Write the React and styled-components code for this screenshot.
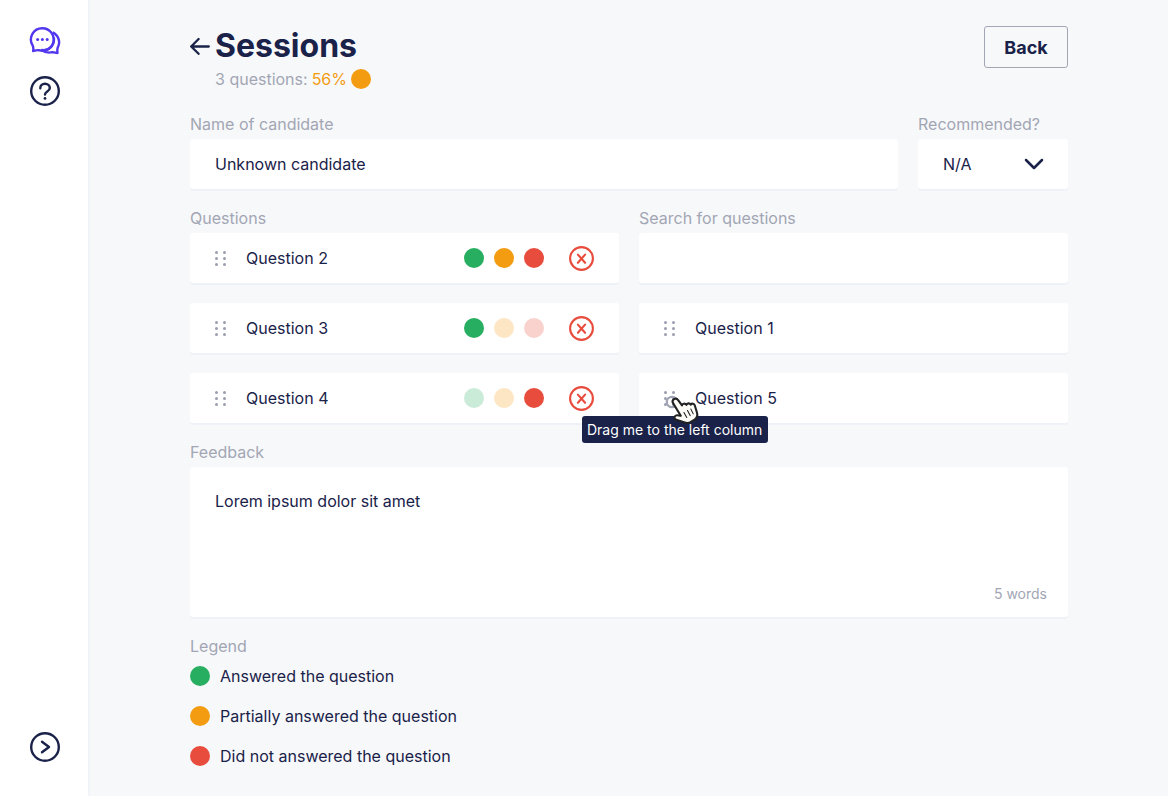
import React from "react";
import styled, { createGlobalStyle } from "styled-components";

const GlobalStyle = createGlobalStyle`
  * {
    box-sizing: border-box;
  }

  body {
    margin: 0;
    background: #f7f8fa;
    color: #1a2249;
    font-family: "Inter", "Liberation Sans", sans-serif;
    font-size: 16px;
    line-height: 19px;
  }

  button, input, select, textarea {
    font: inherit;
    color: inherit;
  }
`;

const Layout = styled.div`
  display: flex;
  min-height: 100vh;
`;

const Sidebar = styled.nav`
  display: flex;
  flex-direction: column;
  align-items: center;
  gap: 20px;
  flex: none;
  width: 90px;
  padding: 26px 0 34px;
  background: white;
  border-right: 2px solid #f0f3f8;
`;

const SideLink = styled.a`
  display: block;
  height: 30px;
  margin-left: 2px;
  color: ${(props) => (props.$active ? "#5138ee" : "#1a2249")};
`;

const IconButton = styled.button`
  display: block;
  padding: 0;
  border: none;
  background: none;
  cursor: pointer;

  svg {
    display: block;
  }
`;

const ToggleButton = styled(IconButton)`
  margin-top: auto;
  margin-left: 2px;
`;

const Main = styled.main`
  flex: 1;
  min-width: 0;
  padding: 26px 100px 30px;
`;

const Header = styled.header`
  display: flex;
  justify-content: space-between;
  align-items: flex-start;
  margin-bottom: 26px;
`;

const TitleRow = styled.div`
  display: flex;
  align-items: center;
  gap: 5px;
`;

const Title = styled.h1`
  margin: 0;
  font-size: 32px;
  line-height: 40px;
  font-weight: 700;
`;

const Summary = styled.div`
  display: flex;
  align-items: center;
  gap: 4px;
  margin-top: 3px;
  padding-left: 25px;
  color: #a2a6b4;
`;

const Percentage = styled.span`
  color: #f39c12;
`;

const BackButton = styled.button`
  min-width: 84px;
  height: 42px;
  padding: 0 19px;
  border: 1px solid #a2a6b4;
  border-radius: 3px;
  background: transparent;
  font-size: 18px;
  font-weight: 700;
  cursor: pointer;
`;

const Form = styled.form`
  display: flex;
  flex-direction: column;
  gap: 20px;
`;

const CandidateRow = styled.div`
  display: grid;
  grid-template-columns: 1fr 150px;
  gap: 20px;
`;

const Columns = styled.div`
  display: grid;
  grid-template-columns: 1fr 1fr;
  gap: 20px;
`;

const Label = styled.label`
  display: block;
  margin-bottom: 5px;
  color: #a2a6b4;
`;

const GroupLabel = styled(Label).attrs({ as: "h2" })`
  margin-top: 0;
  font-size: 16px;
  font-weight: 400;
`;

const Input = styled.input`
  display: block;
  width: 100%;
  height: 50px;
  padding: 0 25px;
  border: none;
  border-radius: 3px;
  outline: none;
  background: white;
  box-shadow: 0 2px 0 #eef1f7;
`;

const SelectWrap = styled.div`
  display: grid;
  align-items: center;

  > * {
    grid-area: 1 / 1;
  }

  svg {
    justify-self: end;
    margin-right: 24px;
    pointer-events: none;
  }
`;

const Select = styled(Input).attrs({ as: "select" })`
  appearance: none;
`;

const List = styled.ul`
  display: flex;
  flex-direction: column;
  gap: 20px;
  margin: 0;
  padding: 0;
  list-style: none;
`;

const SearchResults = styled(List)`
  margin-top: 20px;
`;

const Question = styled.li`
  position: relative;
  display: flex;
  align-items: center;
  height: 50px;
  padding: 0 25px;
  border-radius: 3px;
  background: white;
  box-shadow: 0 2px 0 #eef1f7;
`;

const QuestionName = styled.span`
  flex: 1;
  margin-left: 19px;
`;

const Answers = styled.div`
  display: flex;
  gap: 10px;
  margin-right: 25px;
`;

const dotColors = {
  answered: "#27ae60",
  partial: "#f39c12",
  missed: "#e84c3d",
};

const Dot = styled.span`
  display: block;
  flex: none;
  width: 20px;
  height: 20px;
  border-radius: 50%;
  background: ${(props) => dotColors[props.$kind]};
`;

const AnswerButton = styled(Dot).attrs({ as: "button", type: "button" })`
  padding: 0;
  border: none;
  opacity: ${(props) => (props.$faded ? 0.25 : 1)};
  cursor: pointer;
`;

const Tooltip = styled.div`
  position: absolute;
  z-index: 1;
  top: 43px;
  left: -57px;
  padding: 4px 6px 4px 5px;
  border-radius: 3px;
  background: #1a2249;
  color: white;
  font-size: 14px;
  white-space: nowrap;
`;

const Pointer = styled.svg`
  position: absolute;
  z-index: 2;
  top: 17px;
  left: 24px;
`;

const FeedbackCard = styled.div`
  display: flex;
  flex-direction: column;
  height: 150px;
  border-radius: 3px;
  background: white;
  box-shadow: 0 2px 0 #eef1f7;
`;

const Textarea = styled.textarea`
  display: block;
  flex: 1;
  padding: 25px 25px 0;
  border: none;
  outline: none;
  background: none;
  resize: none;
`;

const WordCount = styled.span`
  align-self: flex-end;
  padding: 0 21px 14px 0;
  color: #a2a6b4;
  font-size: 14px;
`;

const Legend = styled(List)`
  margin-top: 10px;
`;

const LegendItem = styled.li`
  display: flex;
  align-items: center;
  gap: 10px;
`;

const ChatIcon = () => (
  <svg width="32" height="30" viewBox="0 0 32 30" fill="none" stroke="currentColor" strokeWidth="2.4" strokeLinejoin="round">
    <path d="M13.400 2.200a11.300 11.300 0 1 1-3.600 22c-2-.4-3.600.5-5.700.9.4-2.200.4-3.900-.5-5.700A11.300 11.300 0 0 1 13.400 2.200Z" />
    <path d="M23.500 6.400c6.200 3 8.200 9.600 5.300 15-.7 1.900-.6 3.600-.3 5.600-2.200-.2-3.300-1-5.300-.8-3.400.8-7.400.2-10.400-2.200 7.500 1.200 13.200-5.200 12-12.600" />
    <g fill="currentColor" stroke="none">
      <circle cx="8.600" cy="13.400" r="1.500" />
      <circle cx="13.400" cy="13.400" r="1.500" />
      <circle cx="18.200" cy="13.400" r="1.500" />
    </g>
  </svg>
);

const HelpIcon = () => (
  <svg width="30" height="30" viewBox="0 0 30 30" fill="none" stroke="currentColor" strokeWidth="2.4" strokeLinecap="round" strokeLinejoin="round">
    <circle cx="15" cy="15" r="13.800" />
    <path d="M10.300 12.200c0-2.700 2-4.500 4.700-4.500s4.800 1.800 4.800 4.300c0 3.700-4.800 3.300-4.800 6.600" />
    <circle cx="15" cy="22.400" r="1.400" fill="currentColor" stroke="none" />
  </svg>
);

const ExpandIcon = () => (
  <svg width="30" height="30" viewBox="0 0 30 30" fill="none" stroke="currentColor" strokeWidth="2.4" strokeLinecap="round" strokeLinejoin="round">
    <circle cx="15" cy="15" r="13.800" />
    <path d="m12 9.800 7 5.200-7 5.200" />
  </svg>
);

const ArrowIcon = () => (
  <svg width="20" height="18" viewBox="0 0 20 18" fill="none" stroke="currentColor" strokeWidth="2.300" strokeLinecap="round" strokeLinejoin="round">
    <path d="M18.800 9.500H1.200M8.600 2 1.200 9.500l7.400 7.300" />
  </svg>
);

const ChevronIcon = () => (
  <svg width="20" height="12" viewBox="0 0 20 12" fill="none" stroke="currentColor" strokeWidth="2.500" strokeLinecap="round" strokeLinejoin="round">
    <path d="m2 2 8 8 8-8" />
  </svg>
);

const RemoveIcon = () => (
  <svg width="25" height="25" viewBox="0 0 25 25" fill="none" stroke="#e84c3d" strokeWidth="2.100" strokeLinecap="round">
    <circle cx="12.500" cy="12.500" r="11.400" />
    <path d="m8.900 8.600 7.200 8.200M16.100 8.600l-7.200 8.200" />
  </svg>
);

const DragHandle = () => (
  <svg width="12" height="16" viewBox="0 0 12 16" fill="#9a9eae">
    {[2.5, 8.5, 14.5].map((y) => (
      <React.Fragment key={y}>
        <circle cx="1.500" cy={y} r="1.500" />
        <circle cx="9.500" cy={y} r="1.500" />
      </React.Fragment>
    ))}
  </svg>
);

const HandPointer = () => (
  <Pointer width="38" height="36" viewBox="0 0 38 36" aria-hidden="true">
    <circle cx="9" cy="12" r="5.200" fill="none" stroke="#a2a6b4" strokeWidth="2.200" />
    <g transform="translate(-1.500 -2.600) scale(1.220)" stroke="#222" strokeLinecap="round" strokeLinejoin="round">
      <path
        d="M10.200 9.600c1.400-.9 2.700-.3 3.600 1l3 4.200c.2-1.600 2.500-2.100 3.700-.5.400-1.500 2.600-1.700 3.500-.2.900-1.300 2.700-.9 3.300.7l1.700 5.600c.8 2.500.1 4.700-1.900 6l-3.400 2.100c-1.500.8-3 .8-4.600.3l-6.900-2.200c-1.700-.6-2.200-2.700-.6-3.500 1.200-.6 2.900-.1 4.200.2L9.700 13.300c-.9-1.300-.8-2.800.5-3.700Z"
        fill="#fdfcf7"
        strokeWidth="1.700"
      />
      <path d="m18.400 20.500 2.300 4.200M21.300 19l2.200 4.100M24.100 17.800l1.900 3.900" fill="none" strokeWidth=".9" />
    </g>
  </Pointer>
);

const kinds = ["answered", "partial", "missed"];

const questions = [
  { name: "Question 2", answer: null },
  { name: "Question 3", answer: "answered" },
  { name: "Question 4", answer: "missed" },
];

const legend = [
  { kind: "answered", text: "Answered the question" },
  { kind: "partial", text: "Partially answered the question" },
  { kind: "missed", text: "Did not answered the question" },
];

const App = () => {
  return (
    <Layout>
      <GlobalStyle />
      <Sidebar>
        <SideLink href="#sessions" aria-label="Sessions" $active>
          <ChatIcon />
        </SideLink>
        <SideLink href="#help" aria-label="Help">
          <HelpIcon />
        </SideLink>
        <ToggleButton type="button" aria-label="Expand">
          <ExpandIcon />
        </ToggleButton>
      </Sidebar>

      <Main>
        <Header>
          <div>
            <TitleRow>
              <IconButton type="button" aria-label="Go back">
                <ArrowIcon />
              </IconButton>
              <Title>Sessions</Title>
            </TitleRow>
            <Summary>
              <span>3 questions:</span>
              <Percentage>56%</Percentage>
              <Dot $kind="partial" />
            </Summary>
          </div>
          <BackButton type="button">Back</BackButton>
        </Header>

        <Form>
          <CandidateRow>
            <div>
              <Label htmlFor="candidate">Name of candidate</Label>
              <Input id="candidate" defaultValue="Unknown candidate" />
            </div>
            <div>
              <Label htmlFor="recommended">Recommended?</Label>
              <SelectWrap>
                <Select id="recommended" defaultValue="N/A">
                  <option>N/A</option>
                  <option>Yes</option>
                  <option>No</option>
                </Select>
                <ChevronIcon />
              </SelectWrap>
            </div>
          </CandidateRow>

          <Columns>
            <div>
              <GroupLabel>Questions</GroupLabel>
              <List>
                {questions.map(({ name, answer }) => (
                  <Question key={name}>
                    <DragHandle />
                    <QuestionName>{name}</QuestionName>
                    <Answers>
                      {kinds.map((kind) => (
                        <AnswerButton
                          key={kind}
                          $kind={kind}
                          $faded={answer && answer !== kind}
                          aria-label={kind}
                        />
                      ))}
                    </Answers>
                    <IconButton type="button" aria-label={`Remove ${name}`}>
                      <RemoveIcon />
                    </IconButton>
                  </Question>
                ))}
              </List>
            </div>
            <div>
              <Label htmlFor="search">Search for questions</Label>
              <Input id="search" />
              <SearchResults>
                <Question>
                  <DragHandle />
                  <QuestionName>Question 1</QuestionName>
                </Question>
                <Question>
                  <DragHandle />
                  <QuestionName>Question 5</QuestionName>
                  <Tooltip role="tooltip">Drag me to the left column</Tooltip>
                  <HandPointer />
                </Question>
              </SearchResults>
            </div>
          </Columns>

          <div>
            <Label htmlFor="feedback">Feedback</Label>
            <FeedbackCard>
              <Textarea id="feedback" defaultValue="Lorem ipsum dolor sit amet" />
              <WordCount>5 words</WordCount>
            </FeedbackCard>
          </div>

          <section>
            <GroupLabel>Legend</GroupLabel>
            <Legend>
              {legend.map(({ kind, text }) => (
                <LegendItem key={kind}>
                  <Dot $kind={kind} />
                  {text}
                </LegendItem>
              ))}
            </Legend>
          </section>
        </Form>
      </Main>
    </Layout>
  );
};

export default App;
